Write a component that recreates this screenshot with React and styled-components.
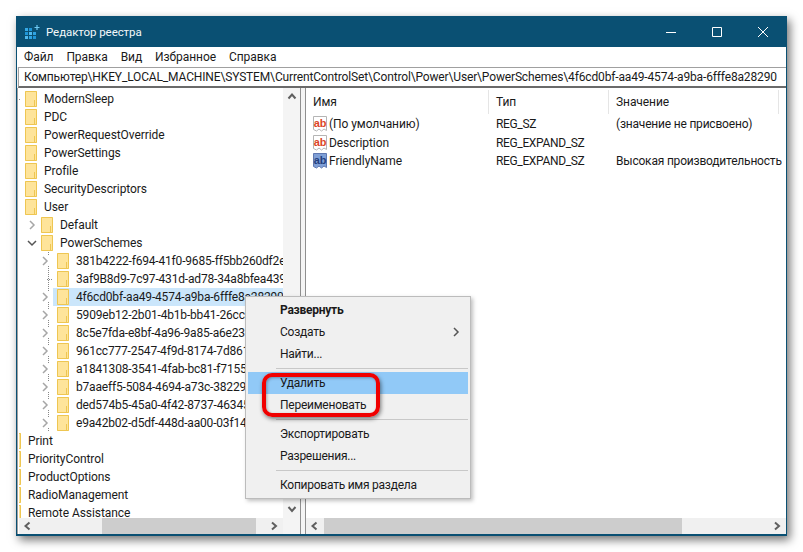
import styled, { createGlobalStyle } from "styled-components";

const menuNames = ["Файл", "Правка", "Вид", "Избранное", "Справка"];

const treeRows = [
  { level: 0, name: "ModernSleep", dots: true },
  { level: 0, name: "PDC" },
  { level: 0, name: "PowerRequestOverride" },
  { level: 0, name: "PowerSettings" },
  { level: 0, name: "Profile" },
  { level: 0, name: "SecurityDescriptors" },
  { level: 0, name: "User" },
  { level: 1, name: "Default", arrow: "closed" },
  { level: 1, name: "PowerSchemes", arrow: "open" },
  { level: 2, name: "381b4222-f694-41f0-9685-ff5bb260df2e", arrow: "closed" },
  { level: 2, name: "3af9B8d9-7c97-431d-ad78-34a8bfea439f", dots: true },
  { level: 2, name: "4f6cd0bf-aa49-4574-a9ba-6fffe8a28290", arrow: "closed", selected: true },
  { level: 2, name: "5909eb12-2b01-4b1b-bb41-26cc3a5d8b8e", arrow: "closed" },
  { level: 2, name: "8c5e7fda-e8bf-4a96-9a85-a6e23a8c635c", arrow: "closed" },
  { level: 2, name: "961cc777-2547-4f9d-8174-7d86181b8a7a", arrow: "closed" },
  { level: 2, name: "a1841308-3541-4fab-bc81-f71556f20b4a", arrow: "closed" },
  { level: 2, name: "b7aaeff5-5084-4694-a73c-38229746e2c9", arrow: "closed" },
  { level: 2, name: "ded574b5-45a0-4f42-8737-46345c09c238", arrow: "closed" },
  { level: 2, name: "e9a42b02-d5df-448d-aa00-03f14749eb61", arrow: "closed" },
  { level: -1, name: "Print" },
  { level: -1, name: "PriorityControl" },
  { level: -1, name: "ProductOptions" },
  { level: -1, name: "RadioManagement" },
  { level: -1, name: "Remote Assistance" },
];

const values = [
  { name: "(По умолчанию)", type: "REG_SZ", value: "(значение не присвоено)", tone: "red" },
  { name: "Description", type: "REG_EXPAND_SZ", value: "", tone: "red" },
  { name: "FriendlyName", type: "REG_EXPAND_SZ", value: "Высокая производительность", tone: "blue" },
];

const gridCells = [
  [0, 3, "#35a9e6"],
  [4, 3, "#1f96d8"],
  [0, 7, "#1f96d8"],
  [4, 7, "#4fb9ee"],
  [8, 7, "#2fa3e2"],
  [0, 11, "#4fb9ee"],
  [4, 11, "#2fa3e2"],
  [8, 11, "#1f96d8"],
];

const GlobalStyle = createGlobalStyle`
  html, body {
    margin: 0;
    background: #fff;
  }
  body {
    font-family: Roboto, "Noto Sans", sans-serif;
    font-size: 12px;
    letter-spacing: -0.07px;
    color: #1a1a1a;
  }
`;

function Chevron({ dir }) {
  const paths = {
    left: "M6.5 1.5 2.5 5l4 3.5",
    right: "M3 1.5 7 5 3 8.5",
    up: "M1.5 6.5 5 2.5l3.5 4",
    down: "M1.5 3 5 7l3.5-4",
  };
  return (
    <svg width="10" height="10" viewBox="0 0 10 10" fill="none">
      <path d={paths[dir]} stroke="#5f5f5f" strokeWidth="2" />
    </svg>
  );
}

function TreeArrow({ open, color }) {
  return (
    <svg width="10" height="10" viewBox="0 0 10 10" fill="none">
      <path
        d={open ? "M1 3l4 4 4-4" : "M3 1l4 4-4 4"}
        stroke={color || (open ? "#555" : "#a6a6a6")}
        strokeWidth="1.5"
      />
    </svg>
  );
}

function Folder() {
  return (
    <svg width="12" height="16" viewBox="0 0 12 16">
      <path d="M0 0h12v16H0z" fill="#fee49a" />
      <path d="M.5.5h11v15H.5z" fill="none" stroke="#eec652" />
      <path d="M9.5 15V9" fill="none" stroke="#eec652" />
    </svg>
  );
}

function ValueIcon({ tone }) {
  const blue = tone === "blue";
  return (
    <svg width="16" height="16" viewBox="0 0 16 16">
      <path
        d="M1.5 .5h13v14l-2.5-1.5-2.5 2-2.5-2-2.5 2-3-1.5z"
        fill={blue ? "#7f9fd6" : "#fff"}
        stroke={blue ? "#5f78b0" : "#b5b5b5"}
      />
      <text
        x="8"
        y="10.5"
        textAnchor="middle"
        fontSize="11"
        fontWeight="700"
        fontFamily="Liberation Sans, sans-serif"
        fill={blue ? "#24407e" : "#dc4526"}
      >
        ab
      </text>
    </svg>
  );
}

function AppIcon() {
  return (
    <svg width="15" height="14" viewBox="0 0 15 14">
      {gridCells.map(([x, y, fill]) => (
        <rect key={`${x}-${y}`} x={x} y={y} width="3" height="3" fill={fill} />
      ))}
      <path d="M12 0v5M9.5 2.5h5" stroke="#6fcaf4" strokeWidth="1.2" />
    </svg>
  );
}

export default function App() {
  return (
    <Page>
      <GlobalStyle />
      <Window>
        <TitleBar>
          <TitleIcon>
            <AppIcon />
          </TitleIcon>
          <Title>Редактор реестра</Title>
          <CaptionButton>
            <svg width="12" height="12" viewBox="0 0 12 12">
              <path d="M1 6.5h10" stroke="#fff" />
            </svg>
          </CaptionButton>
          <CaptionButton>
            <svg width="12" height="12" viewBox="0 0 12 12">
              <path d="M1.5 1.5h9v9h-9z" fill="none" stroke="#fff" />
            </svg>
          </CaptionButton>
          <CaptionButton>
            <svg width="12" height="12" viewBox="0 0 12 12">
              <path d="M1 1l10 10M11 1 1 11" stroke="#fff" />
            </svg>
          </CaptionButton>
        </TitleBar>

        <MenuBar>
          {menuNames.map((name) => (
            <span key={name}>{name}</span>
          ))}
        </MenuBar>

        <AddressBar>
          Компьютер\HKEY_LOCAL_MACHINE\SYSTEM\CurrentControlSet\Control\Power\User\PowerSchemes\4f6cd0bf-aa49-4574-a9ba-6fffe8a28290
        </AddressBar>

        <Panes>
          <TreePane>
            <TreeBody>
              <TreeList>
                {treeRows.map((row) => (
                  <TreeRow key={row.name} $level={row.level}>
                    <Expander $guide={row.level === 2}>
                      {row.arrow && <TreeArrow open={row.arrow === "open"} />}
                      {row.dots && <Dots />}
                    </Expander>
                    <RowContent $selected={row.selected}>
                      <Folder />
                      <RowName $tight={row.level === 2}>{row.name}</RowName>
                    </RowContent>
                  </TreeRow>
                ))}
              </TreeList>
              <VScroll>
                <Chevron dir="up" />
                <Chevron dir="down" />
              </VScroll>
            </TreeBody>
            <TreeFooter>
              <HScroll>
                <Chevron dir="left" />
                <TrackArea>
                  <Thumb $left={65} $width={154} />
                </TrackArea>
                <Chevron dir="right" />
              </HScroll>
              <ScrollCorner />
            </TreeFooter>
          </TreePane>

          <Splitter />

          <ListPane>
            <ListBody>
              <ListHeader>
                <HeaderCell $width={183}>Имя</HeaderCell>
                <HeaderCell $width={120}>Тип</HeaderCell>
                <HeaderCell $width={170}>Значение</HeaderCell>
              </ListHeader>
              {values.map((row) => (
                <ValueRow key={row.name}>
                  <NameCell>
                    <ValueIcon tone={row.tone} />
                    {row.name}
                  </NameCell>
                  <TypeCell>{row.type}</TypeCell>
                  <DataCell>{row.value}</DataCell>
                </ValueRow>
              ))}
            </ListBody>
            <HScroll>
              <Chevron dir="left" />
              <TrackArea>
                <Thumb $left={0} $width={358} />
              </TrackArea>
              <Chevron dir="right" />
            </HScroll>
          </ListPane>
        </Panes>

        <ContextMenu>
          <MenuItem $bold>Развернуть</MenuItem>
          <MenuItem>
            Создать
            <SubArrow>
              <TreeArrow color="#555" />
            </SubArrow>
          </MenuItem>
          <MenuItem>Найти...</MenuItem>
          <MenuSeparator />
          <MenuItem $active>Удалить</MenuItem>
          <MenuItem>Переименовать</MenuItem>
          <MenuSeparator />
          <MenuItem>Экспортировать</MenuItem>
          <MenuItem>Разрешения...</MenuItem>
          <MenuSeparator />
          <MenuItem>Копировать имя раздела</MenuItem>
          <Highlight />
        </ContextMenu>
      </Window>
    </Page>
  );
}

const Page = styled.div`
  padding: 16px;
  width: 771px;
  height: 520px;
`;

const Window = styled.div`
  position: relative;
  box-sizing: border-box;
  width: 771px;
  height: 520px;
  display: flex;
  flex-direction: column;
  background: #f0f0f0;
  border: 1px solid #0a5073;
  border-bottom-width: 2px;
  box-shadow: 3px 4px 9px rgba(0, 0, 0, 0.55);
`;

const TitleBar = styled.div`
  height: 30px;
  flex: none;
  display: flex;
  align-items: center;
  background: #0a5073;
  color: #fff;
`;

const TitleIcon = styled.div`
  display: flex;
  margin: 0 6px 0 8px;
`;

const Title = styled.div`
  flex: 1;
  font-size: 11.5px;
  color: #f4f8fa;
`;

const CaptionButton = styled.div`
  width: 46px;
  display: flex;
  justify-content: center;
`;

const MenuBar = styled.div`
  height: 20px;
  flex: none;
  display: flex;
  align-items: center;
  gap: 13px;
  padding-left: 7px;
  background: #fff;
`;

const AddressBar = styled.div`
  height: 21px;
  flex: none;
  box-sizing: border-box;
  margin-left: 1px;
  padding-left: 5px;
  display: flex;
  align-items: center;
  white-space: nowrap;
  overflow: hidden;
  letter-spacing: -0.15px;
  background: #fff;
  border-top: 1px solid #a0a0a0;
  border-left: 1px solid #a0a0a0;
  border-bottom: 2px solid #6a6a6a;
`;

const Panes = styled.div`
  flex: 1;
  min-height: 0;
  display: flex;
  background: #fff;
`;

const TreePane = styled.div`
  width: 283px;
  flex: none;
  display: flex;
  flex-direction: column;
  padding-left: 1px;
  box-sizing: border-box;
  border-left: 1px solid #a0a0a0;
`;

const TreeBody = styled.div`
  flex: 1;
  min-height: 0;
  display: flex;
`;

const TreeList = styled.div`
  flex: 1;
  min-width: 0;
  overflow: hidden;
  padding-top: 2px;
`;

const TreeRow = styled.div`
  height: 18px;
  display: flex;
  align-items: center;
  margin-left: ${(props) => props.$level * 16 + 2}px;
  white-space: nowrap;
`;

const Expander = styled.div`
  width: 16px;
  height: 18px;
  box-sizing: border-box;
  margin-left: -16px;
  padding-left: 3px;
  flex: none;
  display: flex;
  align-items: center;
  justify-content: ${(props) => (props.$guide ? "flex-start" : "flex-end")};
  background-image: ${(props) =>
    props.$guide ? "linear-gradient(#888 1px, transparent 1px)" : "none"};
  background-size: 1px 2px;
  background-position: 11px 0;
  background-repeat: repeat-y;

  svg {
    background: #fff;
  }
`;

const Dots = styled.div`
  width: 6px;
  height: 1px;
  margin-left: auto;
  background-image: linear-gradient(90deg, #888 1px, transparent 1px);
  background-size: 2px 1px;
`;

const RowContent = styled.div`
  flex: 1;
  height: 18px;
  min-width: 0;
  display: flex;
  align-items: center;
  gap: 7px;
  padding-left: 4px;
  background: ${(props) => (props.$selected ? "#cbe6fb" : "transparent")};
  overflow: hidden;

  svg {
    flex: none;
  }
`;

const RowName = styled.span`
  flex: none;
  letter-spacing: ${(props) => (props.$tight ? "-0.18px" : "inherit")};
`;

const VScroll = styled.div`
  width: 17px;
  flex: none;
  display: flex;
  flex-direction: column;
  justify-content: space-between;
  align-items: center;
  padding: 4px 0;
  background: #f4f4f4;
`;

const TreeFooter = styled.div`
  flex: none;
  display: flex;
`;

const ScrollCorner = styled.div`
  width: 17px;
  flex: none;
  background: #f4f4f4;
`;

const HScroll = styled.div`
  height: 16px;
  flex: 1;
  min-width: 0;
  max-height: 16px;
  display: flex;
  align-items: center;
  gap: 4px;
  padding: 0 4px;
  background: #f0f0f0;

  svg {
    flex: none;
  }
`;

const TrackArea = styled.div`
  position: relative;
  flex: 1;
  height: 100%;
`;

const Thumb = styled.div`
  position: absolute;
  top: 0;
  bottom: 0;
  left: ${(props) => props.$left}px;
  width: ${(props) => props.$width}px;
  background: #cdcdcd;
`;

const Splitter = styled.div`
  width: 6px;
  flex: none;
  box-sizing: border-box;
  background: #f4f4f4;
  border-left: 1px solid #8f8f8f;
  border-right: 1px solid #8f8f8f;
`;

const ListPane = styled.div`
  flex: 1;
  min-width: 0;
  display: flex;
  flex-direction: column;
`;

const ListBody = styled.div`
  flex: 1;
  min-height: 0;
  overflow: hidden;
`;

const ListHeader = styled.div`
  height: 24px;
  margin: 2px 0 1px;
  display: flex;
  align-items: center;
`;

const HeaderCell = styled.div`
  flex: none;
  width: ${(props) => props.$width}px;
  height: 24px;
  box-sizing: border-box;
  padding-left: 7px;
  display: flex;
  align-items: center;
  border-right: 1px solid #e5e5e5;
`;

const ValueRow = styled.div`
  height: 18.5px;
  display: flex;
  align-items: center;
  white-space: nowrap;
`;

const NameCell = styled.div`
  flex: none;
  width: 183px;
  box-sizing: border-box;
  padding-left: 6px;
  display: flex;
  align-items: center;
  gap: 1px;
`;

const TypeCell = styled.div`
  flex: none;
  width: 120px;
  box-sizing: border-box;
  padding-left: 7px;
  letter-spacing: -0.35px;
`;

const DataCell = styled.div`
  padding-left: 7px;
  letter-spacing: -0.2px;
`;

const ContextMenu = styled.div`
  position: absolute;
  left: 228px;
  top: 279px;
  width: 226px;
  box-sizing: border-box;
  padding: 2px;
  background: #f0f0f0;
  border: 1px solid #bcbcbc;
  box-shadow: 2px 2px 4px rgba(0, 0, 0, 0.25);
`;

const MenuItem = styled.div`
  position: relative;
  height: 22px;
  display: flex;
  align-items: center;
  padding-left: 32px;
  letter-spacing: -0.25px;
  font-weight: ${(props) => (props.$bold ? 700 : 400)};
  background: ${(props) => (props.$active ? "#91c9f7" : "transparent")};
`;

const SubArrow = styled.span`
  position: absolute;
  right: 7px;
  top: 6px;
  display: flex;
`;

const MenuSeparator = styled.div`
  height: 1px;
  margin: 3px 0 3px 28px;
  background: #c8c8c8;
`;

const Highlight = styled.div`
  position: absolute;
  left: 16px;
  top: 76px;
  width: 118px;
  height: 44px;
  box-sizing: border-box;
  border: 4px solid #f00000;
  border-radius: 10px;
  box-shadow: 1px 2px 4px rgba(0, 0, 0, 0.5), inset 1px 1px 3px rgba(0, 0, 0, 0.3);
`;
